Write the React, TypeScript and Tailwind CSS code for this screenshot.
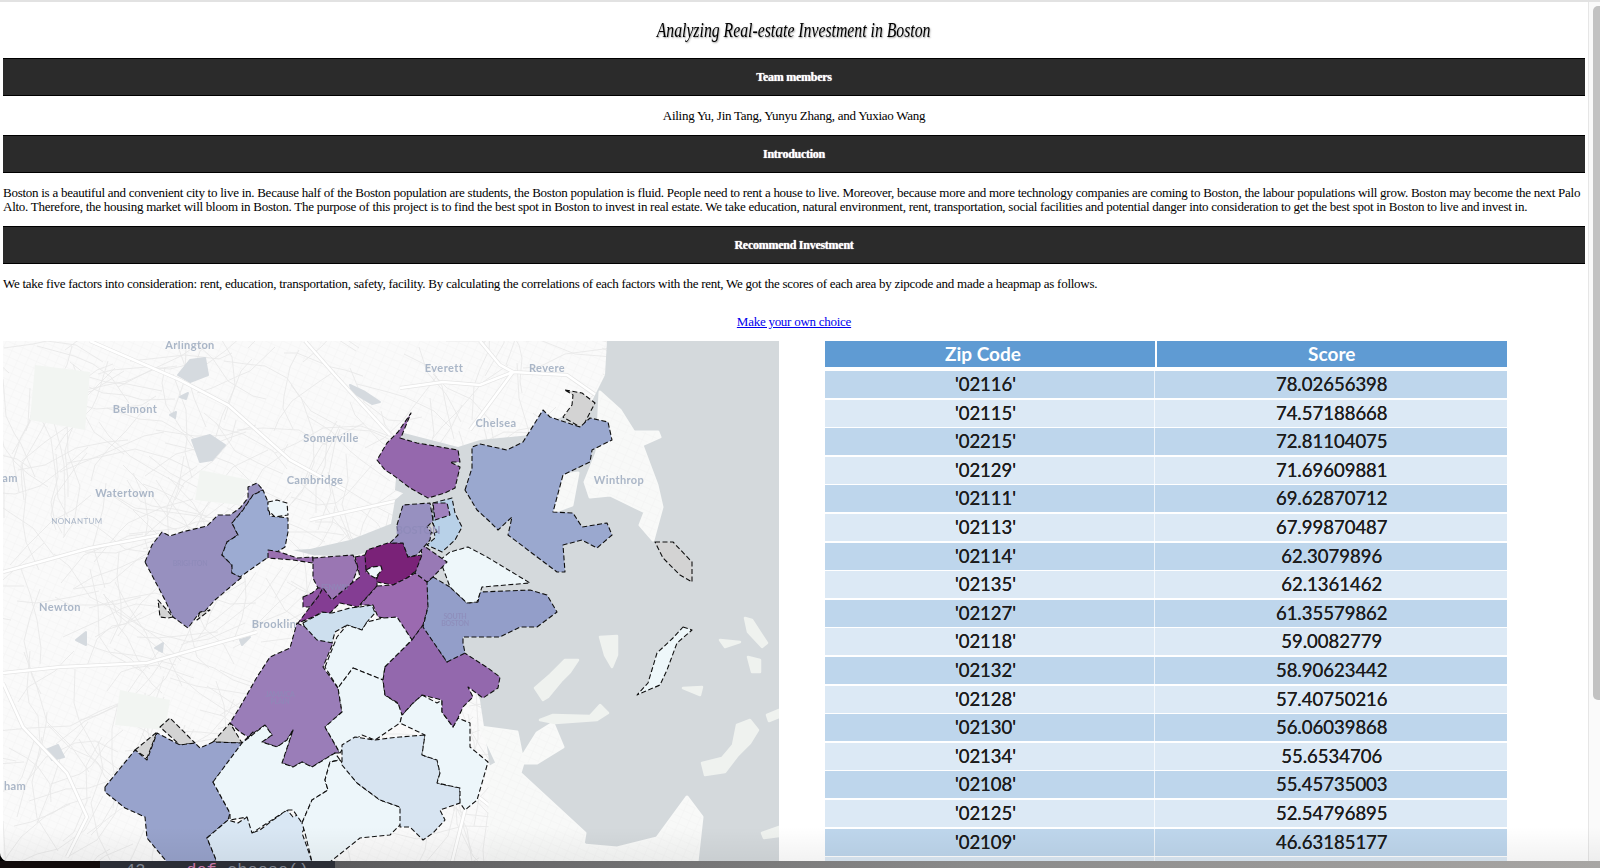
const rows = [
  ["'02116'", "78.02656398"],
  ["'02115'", "74.57188668"],
  ["'02215'", "72.81104075"],
  ["'02129'", "71.69609881"],
  ["'02111'", "69.62870712"],
  ["'02113'", "67.99870487"],
  ["'02114'", "62.3079896"],
  ["'02135'", "62.1361462"],
  ["'02127'", "61.35579862"],
  ["'02118'", "59.0082779"],
  ["'02132'", "58.90623442"],
  ["'02128'", "57.40750216"],
  ["'02130'", "56.06039868"],
  ["'02134'", "55.6534706"],
  ["'02108'", "55.45735003"],
  ["'02125'", "52.54796895"],
  ["'02109'", "46.63185177"],
  ["", ""],
];

// zip code areas, page coordinates
const areas: [string, string][] = [
  ["#d3d3d3", "565,390 582,393 595,403 582,428 563,417 572,405 573,395"],
  ["#d3d3d3", "655,542 673,542 692,562 692,582 680,575 663,558"],
  ["#d3d3d3", "158,600 173,617 168,618 160,617"],
  ["#d3d3d3", "200,612 210,610 197,620"],
  ["#d3d3d3", "160,727 170,718 195,743 180,745"],
  ["#d3d3d3", "135,750 157,732 147,758"],
  ["#d3d3d3", "213,742 230,723 242,743"],
  ["#eef7fa", "683,627 692,630 677,643 667,670 660,685 637,695 648,683 657,653 673,638"],
  ["#9790bf", "145,562 152,545 162,532 170,536 182,532 207,526 218,515 230,515 240,508 248,498 248,487 257,483 263,490 253,495 243,510 232,523 238,535 227,542 222,555 232,565 232,573 242,577 215,600 205,611 200,612 188,628 173,617 165,600"],
  ["#9cabd2", "232,523 243,510 253,495 263,490 268,502 270,516 288,518 288,532 285,547 267,558 240,577 232,573 232,565 222,555 227,542 238,535"],
  ["#eef6fa", "268,502 277,500 287,503 288,515 275,517 268,510"],
  ["#9a70b0", "268,550 280,552 297,558 313,557 313,563 293,560 268,558"],
  ["#9a76b3", "313,558 353,555 358,568 352,583 332,600 318,588 313,578"],
  ["#8f55a3", "303,597 312,593 318,588 323,588 318,597 310,607 303,607"],
  ["#cddfee", "303,623 323,612 332,613 350,608 360,607 372,605 375,613 367,622 362,630 347,625 335,632 332,643 320,643 308,637"],
  ["#843d93", "355,557 365,555 367,567 366,572 377,578 377,586 358,607 340,603 330,613 322,612 313,617 298,623 310,607 318,597 323,588 332,600 352,583 360,577 358,568"],
  ["#7a2178", "365,555 367,550 388,543 403,543 408,557 422,555 417,570 407,578 393,585 377,582 377,578 382,567 372,567 366,570"],
  ["#eef6fa", "366,570 372,567 381,566 382,570 375,578 370,575"],
  ["#9b6bb0", "377,586 393,585 407,578 415,573 428,582 428,607 423,625 412,640 397,620 378,617 373,605 360,605"],
  ["#9a7db8", "297,623 305,627 317,640 333,643 323,667 338,688 342,712 325,727 340,753 335,753 312,767 302,762 293,767 282,763 293,730 287,740 277,747 262,742 272,735 265,725 248,737 240,732 230,723 240,707 257,677 270,657 290,648"],
  ["#98a3cc", "105,787 135,750 147,760 157,733 180,745 195,743 200,748 213,742 242,743 253,732 213,782 230,813 228,820 207,838 217,862 167,862 147,838 145,817 125,808 105,792"],
  ["#d9e7f4", "207,838 228,820 238,823 247,817 252,827 252,833 260,830 273,820 287,810 293,817 302,813 305,827 302,833 307,847 312,862 217,862"],
  ["#edf6fa", "213,782 242,743 265,725 272,735 262,742 277,747 287,740 293,730 282,763 293,767 302,762 312,767 335,753 340,760 330,762 325,780 328,790 312,800 302,823 293,810 287,810 252,833 247,817 230,820 230,813"],
  ["#edf6fa", "302,823 312,800 328,790 325,780 330,762 340,760 357,783 380,800 400,807 405,820 390,835 360,838 330,862 312,862 305,833"],
  ["#edf6fa", "325,667 337,637 347,625 362,630 367,622 383,618 397,617 412,640 385,667 383,680 353,668 338,688"],
  ["#edf6fa", "353,668 383,680 385,695 400,705 413,703 402,715 400,723 375,740 362,735 345,745 340,753 325,727 342,712 338,688"],
  ["#d7e4f1", "425,735 422,755 437,760 440,773 437,783 460,788 460,803 440,810 445,820 433,833 423,840 410,827 400,827 400,807 380,800 357,783 342,765 342,745 355,737 375,740 390,738 400,737"],
  ["#edf6fa", "422,695 437,703 442,700 442,712 453,727 458,718 470,723 470,747 488,762 482,783 477,800 465,810 460,803 460,788 437,783 440,773 437,760 422,755 425,735 400,723 402,715 413,703"],
  ["#9368ad", "385,667 412,640 423,625 447,662 463,652 488,668 500,677 498,688 483,698 468,687 473,697 463,707 458,718 453,727 442,712 442,700 422,695 413,703 402,715 398,703 385,695 383,680"],
  ["#939ec9", "427,582 433,577 450,587 467,603 478,602 480,592 530,590 547,595 557,612 537,627 520,627 500,637 463,637 463,643 465,653 447,662 423,627 428,607"],
  ["#eef7fa", "440,560 450,552 468,547 487,557 530,583 482,587 477,602 467,603 450,587"],
  ["#9879b5", "420,543 427,548 447,562 433,577 427,582 415,573 422,555"],
  ["#9790c0", "397,525 403,505 430,503 433,520 430,540 417,555 408,557 403,543 390,543 398,535"],
  ["#b8d1e8", "433,503 452,498 455,513 462,527 455,540 442,552 427,545 435,538 433,520"],
  ["#a081bd", "433,503 447,503 450,515 435,520"],
  ["#d3d3d3", "427,527 432,522 437,532 432,533"],
  ["#9567ad", "400,438 417,443 458,450 460,462 450,462 460,467 455,488 445,493 428,498 410,488 393,475 385,470 377,460 387,443 398,432 411,413 402,435"],
  ["#9aa8cf", "465,490 472,468 472,447 480,444 507,450 523,442 538,418 543,410 550,417 580,427 590,418 608,422 612,440 592,450 590,462 563,475 553,512 573,513 582,527 607,523 612,535 597,548 582,540 563,545 565,572 557,572 508,535 512,517 498,530 488,520 477,510"],
];

const water = [
  "607,341 779,341 779,862 695,862 702,817 687,797 650,857 587,845 560,813 520,773 490,767 480,700 440,600 390,530 395,500 458,447 480,440 530,435 555,420 590,405 605,375",
  "293,550 310,549 350,540 393,523 430,500 470,480 470,560 430,560 393,545 350,557 313,555",
  "400,432 458,447 470,480 420,500 395,490",
];

// ground that stands in the water: built up, so it carries streets too
const shore = [
  "600,392 620,410 642,445 597,452",
  "585,482 597,452 613,442 633,432 658,432 660,437 642,445 657,485 662,507 653,540 640,525 645,512 610,495 590,497",
  "563,475 553,512 572,505 578,473",
  "480,727 517,732 522,757 537,733 553,723 563,747 537,763 523,763 520,773 585,833 583,845 617,848 657,838 687,797 702,817 697,862 490,862 490,767 497,763",
];

const islands = [
  "600,637 617,636 617,655 612,667 605,655",
  "578,660 570,672 562,680 548,697 543,700 535,688 550,675 565,660",
  "600,705 608,713 597,720 555,723 540,720 553,715 590,716",
  "745,618 752,620 767,643 762,647 748,632",
  "720,640 740,642 725,647",
  "748,657 760,660 760,672 752,672",
  "683,688 702,687 700,695",
  "737,725 750,720 758,730 750,743 738,755 725,772 705,775 702,763 722,758 733,745",
  "767,715 779,710 779,717 769,721",
  "762,833 779,827 779,836 764,838",
];

const ponds = [
  "178,375 190,360 205,358 208,375 190,382",
  "192,440 210,435 225,445 212,460 200,462",
  "180,397 188,393 186,399",
  "170,415 176,412 175,418",
  "46,750 58,745 64,757 52,760",
  "76,640 86,632 86,645",
  "155,648 163,643 162,652",
  "240,640 250,637 242,645",
  "350,385 365,392 380,402 372,404 352,392",
];

const roads = [
  "M90 341 L180 380 L228 405 L290 460 L345 490",
  "M305 341 L335 375 L390 435",
  "M3 572 L90 548 L160 535",
  "M3 673 L60 667 L147 663 L257 632",
  "M3 683 L23 727 L67 773 L87 817 L67 857",
  "M400 388 L443 382 L480 385 L513 372 L567 375 L600 398",
  "M480 341 L500 365 L513 372 L470 430",
  "M310 520 L400 500",
  "M452 862 L470 790 L520 830",
  "M510 790 L560 850",
];

// fixed seed, so the street mesh is the same on every run
let seed = 7;
const rnd = () => {
  seed = (seed * 16807) % 2147483647;
  return seed / 2147483647;
};
const streets: string[] = [];
for (let i = 0; i < 420; i++) {
  let x = 3 + rnd() * 700;
  let y = 341 + rnd() * 521;
  let a = rnd() * 6.28;
  let d = `M${x.toFixed(0)} ${y.toFixed(0)}`;
  for (let j = 0; j < 4; j++) {
    a += (rnd() - 0.5) * 1.1;
    const len = 12 + rnd() * 28;
    x += Math.cos(a) * len;
    y += Math.sin(a) * len;
    d += ` L${x.toFixed(0)} ${y.toFixed(0)}`;
  }
  streets.push(d);
}

const AreaMap = () => (
  <svg viewBox="3 341 776 521" className="w-[776px] h-[521px] shrink-0 block">
    <defs>
      <pattern id="grid" width="9" height="7" patternUnits="userSpaceOnUse" patternTransform="rotate(24)">
        <path d="M0 0H9M0 0V7" stroke="#efefef" strokeWidth="0.6" fill="none" />
      </pattern>
      <filter id="soft">
        <feGaussianBlur stdDeviation="0.45" />
      </filter>
    </defs>
    <g filter="url(#soft)">
      <rect x="3" y="341" width="776" height="521" fill="#fafafa" />
      <rect x="3" y="341" width="776" height="521" fill="url(#grid)" />
      <g fill="none" stroke="#e9e9e9" strokeWidth="0.9">
        {streets.map((d) => (
          <path key={d} d={d} />
        ))}
      </g>
      <g fill="#f2f5f2">
        <polygon points="35,365 90,372 85,430 30,420" />
        <polygon points="200,470 250,480 240,505 195,500" />
        <polygon points="120,690 170,700 165,730 115,725" />
      </g>
      {ponds.map((p) => (
        <polygon key={p} points={p} fill="#d5dadf" stroke="#d5dadf" strokeWidth="2" strokeLinejoin="round" />
      ))}
      <g fill="none" stroke="#e6e6e6" strokeWidth="4">
        {roads.map((d) => (
          <path key={d} d={d} />
        ))}
      </g>
      <g fill="none" stroke="#ffffff" strokeWidth="2.6">
        {roads.map((d) => (
          <path key={d} d={d} />
        ))}
      </g>
      {water.map((p) => (
        <polygon key={p} points={p} fill="#d4d9dc" />
      ))}
      {shore.map((p) => (
        <g key={p}>
          <polygon points={p} fill="#f8f9f8" stroke="#f8f9f8" strokeWidth="3" strokeLinejoin="round" />
          <polygon points={p} fill="url(#grid)" />
        </g>
      ))}
      {islands.map((p) => (
        <polygon key={p} points={p} fill="#eff2ef" stroke="#eff2ef" strokeWidth="2.5" strokeLinejoin="round" />
      ))}
      <g fontFamily="Lato, sans-serif" fontWeight="700" fontSize="11" fill="#aab6c7" textAnchor="middle" letterSpacing="0.4">
        <text x="190" y="349">Arlington</text>
        <text x="135" y="413">Belmont</text>
        <text x="331" y="442">Somerville</text>
        <text x="315" y="484">Cambridge</text>
        <text x="125" y="497">Watertown</text>
        <text x="77" y="524" fontSize="8" fontWeight="400">NONANTUM</text>
        <text x="10" y="482">am</text>
        <text x="444" y="372">Everett</text>
        <text x="547" y="372">Revere</text>
        <text x="496" y="427">Chelsea</text>
        <text x="619" y="484">Winthrop</text>
        <text x="60" y="611">Newton</text>
        <text x="274" y="628">Brooklin</text>
        <text x="15" y="790">ham</text>
      </g>
      {areas.map(([fill, points]) => (
        <polygon key={points} points={points} fill={fill} stroke="#111111" strokeWidth="1.1" strokeDasharray="5 2.5" strokeLinejoin="round" />
      ))}
      <g fontFamily="Lato, sans-serif" fontWeight="700" textAnchor="middle" fill="#8d8ab8" opacity="0.75">
        <text x="190" y="566" fontSize="7">BRIGHTON</text>
        <text x="335" y="590" fontSize="7">FENWAY</text>
        <text x="418" y="534" fontSize="11">BOSTON</text>
        <text x="455" y="619" fontSize="7">SOUTH</text>
        <text x="455" y="626" fontSize="7">BOSTON</text>
        <text x="280" y="697" fontSize="7">JAMAICA</text>
        <text x="280" y="704" fontSize="7">PLAIN</text>
      </g>
    </g>
  </svg>
);

const Bar = ({ title }: { title: string }) => (
  <div className="h-[38px] flex items-center justify-center bg-[#2b2b2b] border-y border-black text-white font-bold text-[12px] [text-shadow:0_0_1px_#ffffff]">
    {title}
  </div>
);

const App = () => {
  return (
    <div className="h-[868px] overflow-hidden flex flex-col bg-black font-['Liberation_Serif',serif] text-[13px] leading-[14px] tracking-[-0.26px] text-black">
      <div className="h-[2px] bg-[#e2e2e2] shrink-0" />
      <div className="flex-1 min-h-0 flex bg-white rounded-bl-[8px] overflow-hidden relative">
        <main className="w-[1585px] pl-[3px] shrink-0 overflow-hidden">
          <h1 className="h-[56px] flex items-center justify-center text-[21px] tracking-normal italic [text-shadow:1px_1px_2px_#999999]">
            <span className="inline-block scale-x-[0.75] whitespace-nowrap">Analyzing Real-estate Investment in Boston</span>
          </h1>
          <Bar title="Team members" />
          <p className="h-[39px] flex items-center justify-center">Ailing Yu, Jin Tang, Yunyu Zhang, and Yuxiao Wang</p>
          <Bar title="Introduction" />
          <p className="py-[13px] h-[53px]">
            Boston is a beautiful and convenient city to live in. Because half of the Boston population are students, the Boston population is fluid. People need to rent a house to live. Moreover, because more and more technology companies are coming to Boston, the labour populations will grow. Boston may become the next Palo Alto. Therefore, the housing market will bloom in Boston. The purpose of this project is to find the best spot in Boston to invest in real estate. We take education, natural environment, rent, transportation, social facilities and potential danger into consideration to get the best spot in Boston to live and invest in.
          </p>
          <Bar title="Recommend Investment" />
          <p className="pt-[13px]">
            We take five factors into consideration: rent, education, transportation, safety, facility. By calculating the correlations of each factors with the rent, We got the scores of each area by zipcode and made a heapmap as follows.
          </p>
          <p className="mt-[24px] mb-[12px] text-center">
            <a href="#" className="text-[#0000ee] underline">Make your own choice</a>
          </p>
          <div className="flex">
            <AreaMap />
            <div className="ml-[46px] w-[682px] shrink-0 font-['Lato',sans-serif] tracking-normal text-[#1c1c1c]">
              <div className="grid grid-cols-[330px_1fr] gap-x-[1.5px] h-[26px] text-white text-[19px] font-bold leading-[26px] text-center mb-[4px]">
                <div className="bg-[#5f9bd3] pr-[14px]">Zip Code</div>
                <div className="bg-[#5f9bd3]">Score</div>
              </div>
              <div className="flex flex-col gap-y-[1.6px]">
                {rows.map(([zip, score], i) => (
                  <div key={i} className={`grid grid-cols-[330px_1fr] gap-x-[1.5px] h-[27px] text-[18.5px] leading-[27px] text-center [text-shadow:0_0_0.6px_#1c1c1c] ${i % 2 === 0 ? "bg-[#bed6ec]" : "bg-[#dce9f5]"}`}>
                    <div className="border-r border-white/70 pr-[8px]">{zip}</div>
                    <div>{score}</div>
                  </div>
                ))}
              </div>
            </div>
          </div>
        </main>
        <div className="ml-[3px] flex-1 bg-[#fafafa] border-l border-[#e6e6e6] pt-[4px] pl-[4px]">
          <div className="h-[694px] bg-[#c2c2c2] rounded-l-[5px]" />
        </div>
        <div className="absolute left-0 right-0 bottom-0 h-[34px] bg-gradient-to-b from-transparent to-black/5" />
      </div>
      <div className="h-[7px] shrink-0 flex overflow-hidden font-['Liberation_Mono',monospace] text-[17px] leading-[20px] tracking-normal">
        <div className="w-[100px] bg-[#120c0c]" />
        <div className="w-[235px] bg-[#2b2e36] pl-[25px] text-[#7f8490] whitespace-pre">
          42    <span className="text-[#c678a8]">def</span> choose()
        </div>
        <div className="flex-1 bg-gradient-to-r from-[#5a5a5c] via-[#8a8a8a] to-[#a8a6a4]" />
      </div>
    </div>
  );
};

export default App;
